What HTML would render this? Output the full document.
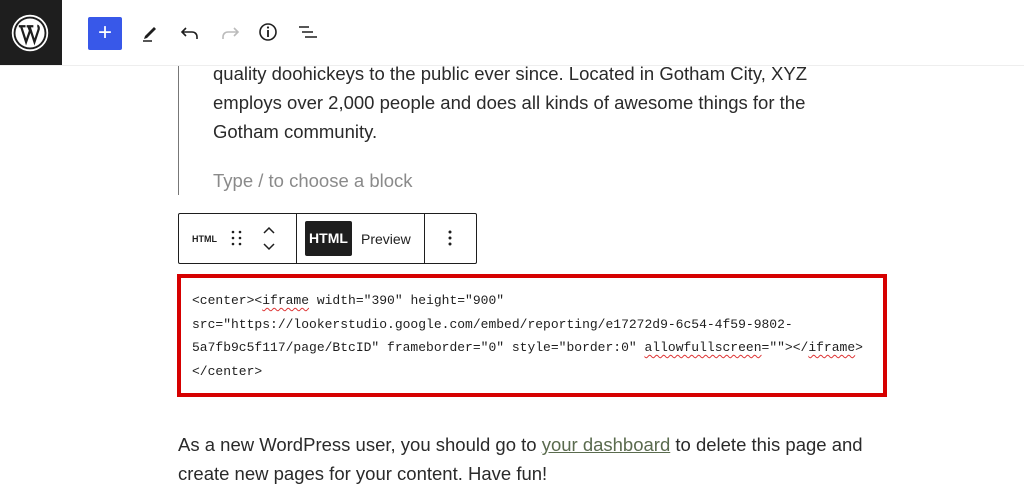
<!DOCTYPE html>
<html><head><style>
body{margin:0;width:1024px;height:499px;background:#fff;position:relative;overflow:hidden;font-family:"Liberation Sans",sans-serif;color:#1e1e1e}
.a{position:absolute}
.p{font-size:18.5px;line-height:29px;color:#2a2a2a;white-space:nowrap}
.code{font-family:"Liberation Mono",monospace;font-size:13px;line-height:23.5px;color:#1e1e1e;white-space:pre}
.sq{text-decoration:underline wavy #d33;text-underline-offset:3px;text-decoration-thickness:1px}
</style></head><body>
<div class="a" style="left:0;top:0;width:62px;height:65px;background:#1e1e1e"></div>
<svg class="a" style="left:11px;top:14px" width="38" height="38" viewBox="0 0 34 34"><circle cx="17" cy="17" r="15.5" fill="none" stroke="#fff" stroke-width="1.6"/><circle cx="17" cy="17" r="13" fill="#fff"/><path d="M7 11h6M9 11l4.5 14 3.5-10-1.5-4M14 11h6M16.5 11l4.5 14 3.5-10.5c1-3-.5-4-1-4" fill="none" stroke="#1e1e1e" stroke-width="2"/></svg>
<div class="a" style="left:0;top:65px;width:1024px;height:1px;background:#eee"></div>
<div class="a" style="left:88px;top:17px;width:34px;height:33px;background:#3858e9;border-radius:2px;color:#fff;font-size:24px;line-height:32px;text-align:center">+</div>
<svg class="a" style="left:138px;top:20px" width="24" height="24" viewBox="0 0 24 24"><path d="M7 16l9-9 2 2-9 9-3 1z" fill="#1e1e1e"/><path d="M5 21h9" stroke="#1e1e1e" stroke-width="1.5"/></svg>
<svg class="a" style="left:178px;top:20px" width="24" height="24" viewBox="0 0 24 24"><path d="M8 8l-4 4 4 4M4 12h10c3 0 5 2 5 5v2" fill="none" stroke="#1e1e1e" stroke-width="1.6"/></svg>
<svg class="a" style="left:218px;top:20px" width="24" height="24" viewBox="0 0 24 24"><path d="M16 8l4 4-4 4M20 12H10c-3 0-5 2-5 5v2" fill="none" stroke="#bbb" stroke-width="1.6"/></svg>
<svg class="a" style="left:256px;top:20px" width="24" height="24" viewBox="0 0 24 24"><circle cx="12" cy="12" r="8" fill="none" stroke="#1e1e1e" stroke-width="1.6"/><path d="M12 10v7" stroke="#1e1e1e" stroke-width="1.8"/><circle cx="12" cy="7.5" r="1.1" fill="#1e1e1e"/></svg>
<svg class="a" style="left:296px;top:20px" width="24" height="24" viewBox="0 0 24 24"><path d="M3 7h10M6 12h11M9 17h12" stroke="#1e1e1e" stroke-width="1.6"/></svg>
<div class="a" style="left:178px;top:66px;width:1px;height:129px;background:#777"></div>
<div class="a p" style="left:213px;top:59px">quality doohickeys to the public ever since. Located in Gotham City, XYZ<br>employs over 2,000 people and does all kinds of awesome things for the<br>Gotham community.</div>
<div class="a p" style="left:213px;top:166px;color:#8a8a8a">Type / to choose a block</div>
<div class="a" style="left:178px;top:213px;width:299px;height:51px;border:1px solid #1e1e1e;border-radius:2px;box-sizing:border-box"></div>
<div class="a" style="left:296px;top:213px;width:1px;height:51px;background:#1e1e1e"></div>
<div class="a" style="left:424px;top:213px;width:1px;height:51px;background:#1e1e1e"></div>
<div class="a" style="left:192px;top:234px;font-size:9px;font-weight:bold">HTML</div>
<svg class="a" style="left:228px;top:228px" width="18" height="20"><g fill="#1e1e1e"><circle cx="5" cy="4" r="1.3"/><circle cx="12" cy="4" r="1.3"/><circle cx="5" cy="10" r="1.3"/><circle cx="12" cy="10" r="1.3"/><circle cx="5" cy="16" r="1.3"/><circle cx="12" cy="16" r="1.3"/></g></svg>
<svg class="a" style="left:261px;top:223px" width="16" height="30"><path d="M3 10l5-5 5 5M3 21l5 5 5-5" fill="none" stroke="#1e1e1e" stroke-width="1.5"/></svg>
<div class="a" style="left:305px;top:221px;width:47px;height:35px;background:#1e1e1e;border-radius:2px;color:#fff;font-size:14px;font-weight:bold;line-height:35px;text-align:center">HTML</div>
<div class="a" style="left:361px;top:231px;font-size:14px">Preview</div>
<svg class="a" style="left:442px;top:228px" width="16" height="20"><g fill="#1e1e1e"><circle cx="8" cy="4" r="1.5"/><circle cx="8" cy="10" r="1.5"/><circle cx="8" cy="16" r="1.5"/></g></svg>
<div class="a" style="left:177px;top:274px;width:710px;height:123px;border:4px solid #d60000;box-sizing:border-box"></div>
<div class="a code" style="left:192px;top:289px">&lt;center&gt;&lt;<span class="sq">iframe</span> width="390" height="900"
src="https://lookerstudio.google.com/embed/reporting/e17272d9-6c54-4f59-9802-
5a7fb9c5f117/page/BtcID" frameborder="0" style="border:0" <span class="sq">allowfullscreen</span>=""&gt;&lt;/<span class="sq">iframe</span>&gt;
&lt;/center&gt;</div>
<div class="a p" style="left:178px;top:430px">As a new WordPress user, you should go to <span style="color:#5a6b4e;text-decoration:underline">your dashboard</span> to delete this page and<br>create new pages for your content. Have fun!</div>
</body></html>
